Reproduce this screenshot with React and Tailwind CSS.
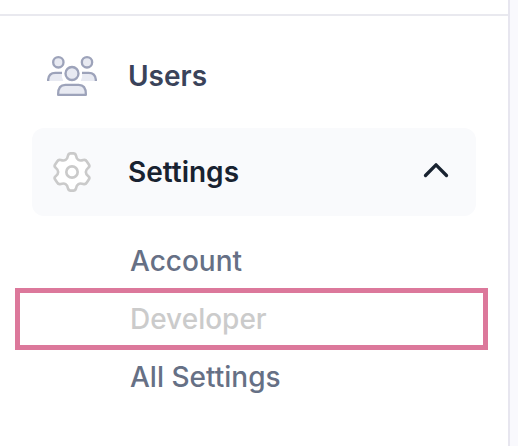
function UsersIcon() {
  return (
    <svg className="h-14 w-16 shrink-0" viewBox="0 0 192 168" fill="#e8eaf2" stroke="#9da3ba" strokeWidth="7">
      <circle cx="55" cy="43" r="15.5" />
      <circle cx="141" cy="43" r="15.5" />
      <path d="M24.500 99V92Q26 74 46 74H66Q63 86 70 99Z" stroke="none" />
      <path d="M167.500 99V92Q166 74 146 74H126Q129 86 122 99Z" stroke="none" />
      <path d="M24.500 99V95Q26 74.500 46 74.500H66M167.500 99V95Q166 74.500 146 74.500H126" fill="none" />
      <circle cx="96" cy="76.500" r="19.500" />
      <path d="M54.500 140.500V138C54.500 121 62 110.500 76 110.500H116C130 110.500 137.500 121 137.500 138V140.500Z" strokeLinejoin="round" />
    </svg>
  );
}

function GearIcon() {
  return (
    <svg className="h-14 w-16 shrink-0" viewBox="0 0 192 168" fill="#fff" stroke="#cacaca" strokeWidth="8" strokeLinejoin="round">
      <path d="M92 28H100Q106 28 108 35C110 48 118 52 130 48Q137 46 140 52L147 62Q150 67 145 71C135 79 135 89 145 97Q150 101 147 106L140 116Q137 122 130 120C118 116 110 120 108 133Q106 140 100 140H92Q86 140 84 133C82 120 74 116 62 120Q55 122 52 116L45 106Q42 101 47 97C57 89 57 79 47 71Q42 67 45 62L52 52Q55 46 62 48C74 52 82 48 84 35Q86 28 92 28Z" />
      <circle cx="96" cy="84" r="17" />
    </svg>
  );
}

export default function App() {
  return (
    <div className="flex h-[446px] w-[518px] overflow-hidden bg-[#f9f9fd] font-['Inter',sans-serif]">
      <aside className="w-[510px] border-r-2 border-[#e7e6ef] bg-white">
        <div className="h-4 border-b-2 border-[#e9e9ef]" />
        <nav>
          <a className="ml-8 mt-4 flex h-[88px] w-[444px] items-center pl-2 text-[28px] font-semibold text-[#3a435a]">
            <UsersIcon />
            <span className="ml-6">Users</span>
          </a>
          <a className="ml-8 mt-2 flex h-[88px] w-[444px] items-center rounded-xl bg-[#f9fafc] pl-2 text-[28px] font-semibold text-[#182230]">
            <GearIcon />
            <span className="ml-6">Settings</span>
            <svg className="mb-1 ml-auto mr-[26px] h-[18px] w-7" viewBox="0 0 28 18" fill="none" stroke="#182230" strokeWidth="3.3" strokeLinecap="round" strokeLinejoin="round">
              <path d="M3.500 14.500L14 3.800L24.500 14.500" />
            </svg>
          </a>
          <div className="ml-[15px] mt-4 w-[473px] text-[28px] font-medium text-[#667085]">
            <a className="flex h-14 items-center pl-[115px] pt-[2px]">Account</a>
            <a className="flex h-[62px] items-center border-[5px] border-[#dc789b] pl-[110px] text-[#cbcbcb]">Developer</a>
            <a className="flex h-14 items-center pb-[2px] pl-[115px]">All Settings</a>
          </div>
        </nav>
      </aside>
    </div>
  );
}
